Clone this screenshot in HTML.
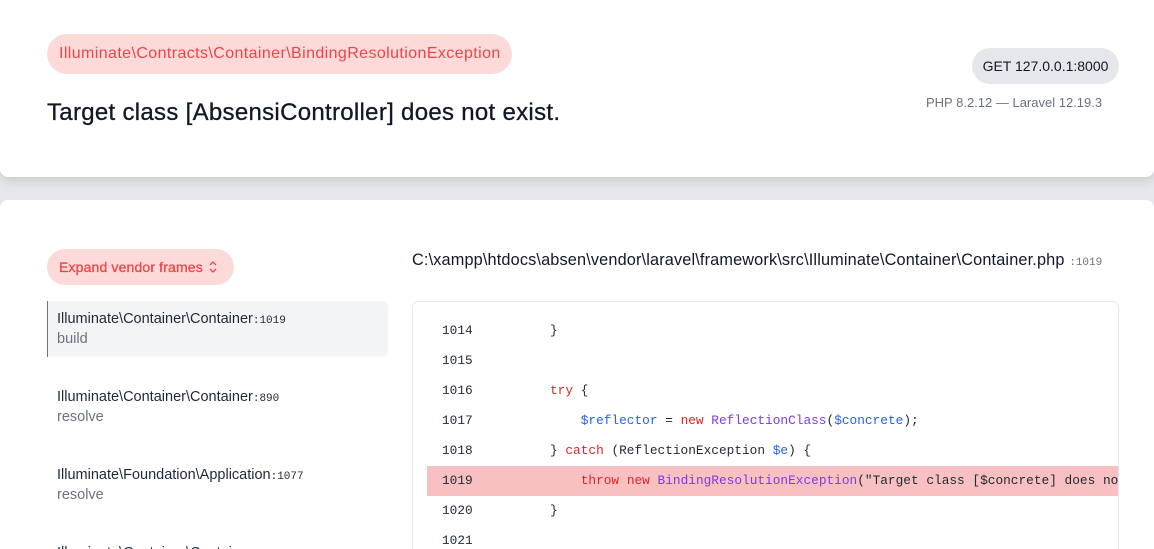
<!DOCTYPE html>
<html><head><meta charset="utf-8"><style>
*{box-sizing:border-box;margin:0;padding:0}
html,body{width:1154px;height:549px;overflow:hidden}
body{background:#e5e7eb;font-family:"Liberation Sans",sans-serif;position:relative}
.card1{position:absolute;left:0;top:0;width:1154px;height:177px;background:#fff;border-radius:0 0 8px 8px;box-shadow:0 4px 10px rgba(0,0,0,.12)}
.card2{position:absolute;left:0;top:200px;width:1154px;height:349px;background:#fff;border-radius:8px 8px 0 0;overflow:hidden}
.badge{position:absolute;left:47px;top:34px;height:40px;width:465px;border-radius:20px;background:#fcdada;color:#ef4444;font-size:16px;line-height:40px;padding-left:12px;letter-spacing:0.4px;white-space:nowrap}
.title{position:absolute;left:47px;top:99px;font-size:24px;color:#111827;letter-spacing:0.3px;-webkit-text-stroke:0.3px #111827;white-space:nowrap}
.get{position:absolute;left:972px;top:48px;width:147px;height:36px;border-radius:18px;background:#e5e7eb;color:#111827;font-size:14px;line-height:36px;text-align:center}
.ver{position:absolute;left:926px;top:95px;font-size:13px;color:#6b7280}
.exp{position:absolute;left:47px;top:49px;width:187px;height:36px;border-radius:18px;background:#fcdada;color:#ef4444;font-size:14px;line-height:36px;padding-left:12px;letter-spacing:0.15px;-webkit-text-stroke:0.3px #ef4444}
.exp svg{position:absolute;left:161px;top:11px}
.fr{position:absolute;left:47px;width:341px;height:56px;padding:10px 10px;font-size:14.5px;color:#1f2937;white-space:nowrap;overflow:hidden}
.fr.act{background:#f3f4f6;border-left:1px solid #6b7280;border-radius:0 6px 6px 0;padding-left:9px}
.fr .m{font-family:"Liberation Mono",monospace;font-size:11px}
.fr .s{color:#6b7280;margin-top:4px}
.path{position:absolute;left:412px;top:51px;font-size:16.3px;color:#111827;letter-spacing:0.15px;white-space:nowrap}
.path .m{font-family:"Liberation Mono",monospace;font-size:11px;color:#6b7280;letter-spacing:0}
.code{position:absolute;left:412px;top:101px;width:707px;height:248px;border:1px solid #e5e7eb;border-bottom:none;border-radius:6px 6px 0 0;overflow:hidden;font-family:"Liberation Mono",monospace;font-size:12.8px;color:#1f2937}
.ln{position:absolute;left:14px;width:692px;height:30px;line-height:30px;white-space:pre;overflow:hidden}
.ln b{font-weight:normal;position:absolute;left:15px}
.ln span.c{position:absolute;left:123px}
.hl{background:#f8c0c0}
.k{color:#dc2626}.v{color:#2563eb}.t{color:#7c3aed}
</style></head><body>
<div class="card1">
<div class="badge">Illuminate\Contracts\Container\BindingResolutionException</div>
<div class="title">Target class [AbsensiController] does not exist.</div>
<div class="get">GET 127.0.0.1:8000</div>
<div class="ver">PHP 8.2.12 — Laravel 12.19.3</div>
</div>
<div class="card2">
<div class="exp">Expand vendor frames<svg width="10" height="14" viewBox="0 0 10 14"><path d="M2 5l3-3 3 3M2 9l3 3 3-3" fill="none" stroke="#ef4444" stroke-width="1.3"/></svg></div>
<div class="fr act" style="top:101px">Illuminate\Container\Container<span class="m">:1019</span><div class="s">build</div></div>
<div class="fr" style="top:179px">Illuminate\Container\Container<span class="m">:890</span><div class="s">resolve</div></div>
<div class="fr" style="top:257px">Illuminate\Foundation\Application<span class="m">:1077</span><div class="s">resolve</div></div>
<div class="fr" style="top:335px;height:14px">Illuminate\Container\Container</div>
<div class="path">C:\xampp\htdocs\absen\vendor\laravel\framework\src\Illuminate\Container\Container.php <span class="m">:1019</span></div>
<div class="code">
<div class="ln" style="top:14px"><b>1014</b><span class="c">}</span></div>
<div class="ln" style="top:44px"><b>1015</b></div>
<div class="ln" style="top:74px"><b>1016</b><span class="c"><span class="k">try</span> {</span></div>
<div class="ln" style="top:104px"><b>1017</b><span class="c">    <span class="v">$reflector</span> = <span class="k">new</span> <span class="t">ReflectionClass</span>(<span class="v">$concrete</span>);</span></div>
<div class="ln" style="top:134px"><b>1018</b><span class="c">} <span class="k">catch</span> (ReflectionException <span class="v">$e</span>) {</span></div>
<div class="ln hl" style="top:164px"><b>1019</b><span class="c">    <span class="k">throw</span> <span class="k">new</span> <span class="t">BindingResolutionException</span>("Target class [$concrete] does not exist.", 0, $e);</span></div>
<div class="ln" style="top:194px"><b>1020</b><span class="c">}</span></div>
<div class="ln" style="top:224px;height:24px"><b>1021</b></div>
</div>
</div>
</body></html>
